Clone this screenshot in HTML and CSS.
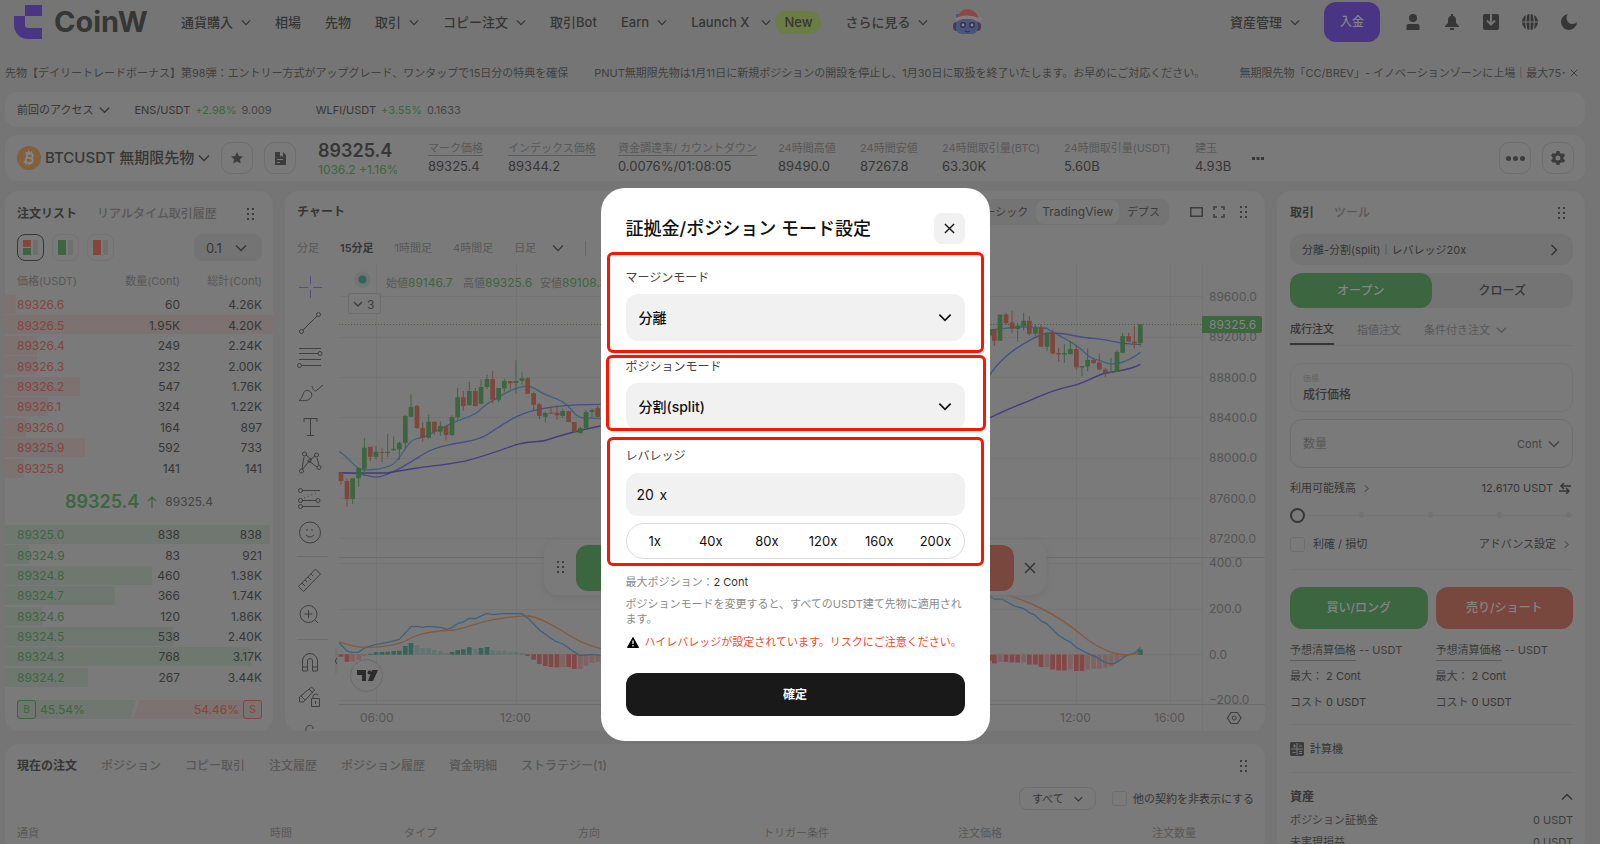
FILE: index.html
```html
<!DOCTYPE html>
<html lang="ja">
<head>
<meta charset="utf-8">
<title>BTCUSDT 無期限先物 | CoinW</title>
<link rel="stylesheet" href="styles.css">
</head>
<body>
<svg class="sprite" aria-hidden="true">
  <symbol id="down" viewBox="0 0 12 8"><path d="M1 1.5l5 5 5-5" fill="none" stroke="currentColor" stroke-width="1.5"/></symbol>
  <symbol id="right" viewBox="0 0 8 12"><path d="M1.5 1l5 5-5 5" fill="none" stroke="currentColor" stroke-width="1.5"/></symbol>
  <symbol id="grip" viewBox="0 0 8 13"><path d="M0 0h2v2H0zM5 0h2v2H5zM0 5h2v2H0zM5 5h2v2H5zM0 10h2v2H0zM5 10h2v2H5z" fill="currentColor"/></symbol>
  <symbol id="cross" viewBox="0 0 12 12"><path d="M1 1l10 10M11 1L1 11" fill="none" stroke="currentColor" stroke-width="1.5"/></symbol>
</svg>

<header class="top">
  <a class="logo" href="#">
    <svg width="28" height="34" viewBox="0 0 28 34"><path d="M11 0h17v11H11zM0 11h11v9a3 3 0 0 0 3 3h14v11H14A14 14 0 0 1 0 20z" fill="#483583"/></svg>
    <span>CoinW</span>
  </a>
  <nav class="menu">
    <a href="#">通貨購入<svg class="chev"><use href="#down"/></svg></a>
    <a href="#">相場</a>
    <a href="#">先物</a>
    <a href="#">取引<svg class="chev"><use href="#down"/></svg></a>
    <a href="#">コピー注文<svg class="chev"><use href="#down"/></svg></a>
    <a href="#">取引Bot</a>
    <a href="#">Earn<svg class="chev"><use href="#down"/></svg></a>
    <a class="launch" href="#">Launch X<svg class="chev"><use href="#down"/></svg><span class="new">New</span></a>
    <a href="#">さらに見る<svg class="chev"><use href="#down"/></svg></a>
    <svg class="mascot" width="30" height="26" viewBox="0 0 30 26">
      <path d="M4 5h4v6H4z" fill="#49577f"/>
      <rect x="1" y="13" width="28" height="9" rx="4" fill="#4b3a4b"/>
      <rect x="4" y="10" width="22" height="15" rx="6" fill="#4a547c"/>
      <path d="M6 9C7 1 15-2 21 2c4 2 5 5 5 8-6-3-14-3-20-1z" fill="#8a4847"/>
      <path d="M4 11c6-4 16-4 22 0" stroke="#857d7d" stroke-width="3" fill="none"/>
      <circle cx="28" cy="10" r="2" fill="#857d7d"/>
      <circle cx="11" cy="16" r="3" fill="#353052"/><circle cx="20" cy="16" r="3" fill="#353052"/>
      <circle cx="11" cy="16" r="1.4" fill="#8b8b99"/><circle cx="20" cy="16" r="1.4" fill="#8b8b99"/>
      <path d="M13 22q3 2 5 0" stroke="#2f2b48" fill="none"/>
    </svg>
  </nav>
  <div class="account">
    <a href="#">資産管理<svg class="chev"><use href="#down"/></svg></a>
    <button class="deposit">入金</button>
    <div class="icons">
      <svg viewBox="0 0 16 16"><circle cx="8" cy="4" r="4"/><path d="M1.500 16v-4a2 2 0 0 1 2-2h9a2 2 0 0 1 2 2v4z"/></svg>
      <svg viewBox="0 0 16 16"><path d="M7 0h2v2a4 4 0 0 1 3 4v3l3 3v1H1v-1l3-3V6a4 4 0 0 1 3-4zM6 14h4v2H6z"/></svg>
      <svg viewBox="0 0 16 16"><path fill-rule="evenodd" d="M2 0h12q2 0 2 2v12q0 2-2 2H2q-2 0-2-2V2q0-2 2-2zm5 0v8L4.500 5.800 3.300 7.200 8 12l4.700-4.800-1.200-1.400L9 8V0z"/></svg>
      <svg viewBox="0 0 16 16"><circle cx="8" cy="8" r="8"/><path d="M0 8h16M8 0v16M5 0q-2.500 8 0 16M11 0q2.500 8 0 16" stroke="#757575" stroke-width="1.200" fill="none"/></svg>
      <svg viewBox="0 0 16 16"><path d="M7 0a6 6 0 1 0 9 8A8 8 0 1 1 7 0z"/></svg>
    </div>
  </div>
</header>

<section class="ticker">
  <div class="news">
    <a href="#">先物【デイリートレードボーナス】第98弾：エントリー方式がアップグレード、ワンタップで15日分の特典を確保</a>
    <a href="#">PNUT無期限先物は1月11日に新規ポジションの開設を停止し、1月30日に取扱を終了いたします。お早めにご対応ください。</a>
    <a href="#">無期限先物「CC/BREV」- イノベーションゾーンに上場｜最大75･</a>
  </div>
  <button class="plain" aria-label="閉じる"><svg width="8" height="8"><use href="#cross"/></svg></button>
</section>

<section class="recent card">
  <button class="plain">前回のアクセス<svg width="11" height="8"><use href="#down"/></svg></button>
  <a href="#"><span>ENS/USDT</span><b>+2.98%</b><i>9.009</i></a>
  <a href="#"><span>WLFI/USDT</span><b>+3.55%</b><i>0.1633</i></a>
</section>

<section class="pair card">
  <div class="symbol">
    <svg width="24" height="24" viewBox="0 0 24 24"><circle cx="12" cy="12" r="12" fill="#825f3d"/><g transform="rotate(12 12 12)" fill="none" stroke="#858585" stroke-width="2"><path d="M7.500 7.500h5.500a2.200 2.200 0 0 1 0 4.500H9.500M9.500 12h4.200a2.400 2.400 0 0 1 0 4.800H7.500M9.500 7v10"/><path d="M10.500 4.800v2.500M13.300 4.800v2.500M10.500 16.800v2.500M13.300 16.800v2.500" stroke-width="1.500"/></g></svg>
    <h1>BTCUSDT 無期限先物</h1>
    <svg width="12" height="8"><use href="#down"/></svg>
  </div>
  <div class="buttons">
    <button class="square" aria-label="お気に入り"><svg width="12" height="12" viewBox="0 0 12 12"><path d="M6 0l1.800 3.900 4.200.5-3.100 2.900.8 4.200L6 9.400l-3.700 2.100.8-4.200L0 4.400l4.200-.5z" fill="currentColor"/></svg></button>
    <button class="square" aria-label="情報"><svg width="11" height="13" viewBox="0 0 11 13"><path fill-rule="evenodd" d="M0 0h5v5l1.500-1.500L8 5V0l3 3v10H0zM2 7v1h6V7zm0 3v1h3v-1z" fill="currentColor"/></svg></button>
  </div>
  <div class="last"><strong>89325.4</strong><span>1036.2 +1.16%</span></div>
  <dl class="stats">
    <div><dt><u>マーク価格</u></dt><dd>89325.4</dd></div>
    <div><dt><u>インデックス価格</u></dt><dd>89344.2</dd></div>
    <div><dt><u>資金調達率/ カウントダウン</u></dt><dd>0.0076%/01:08:05</dd></div>
    <div><dt>24時間高値</dt><dd>89490.0</dd></div>
    <div><dt>24時間安値</dt><dd>87267.8</dd></div>
    <div><dt>24時間取引量(BTC)</dt><dd>63.30K</dd></div>
    <div><dt>24時間取引量(USDT)</dt><dd>5.60B</dd></div>
    <div><dt>建玉</dt><dd>4.93B</dd></div>
  </dl>
  <button class="plain more" aria-label="その他の指標"><svg width="12" height="3" viewBox="0 0 12 3"><path d="M0 0h3v3H0zM4.500 0h3v3h-3zM9 0h3v3H9z" fill="currentColor"/></svg></button>
  <div class="buttons end">
    <button class="square" aria-label="その他"><svg width="19" height="5" viewBox="0 0 19 5" fill="currentColor"><circle cx="2.500" cy="2.500" r="2.500"/><circle cx="9.500" cy="2.500" r="2.500"/><circle cx="16.500" cy="2.500" r="2.500"/></svg></button>
    <button class="square" aria-label="設定"><svg width="14" height="14" viewBox="0 0 14 14"><path fill-rule="evenodd" d="M5.500 0h3l.5 2 1.500.8 2-.6L14 4.800 12.500 6v2l1.500 1.200-1.500 2.600-2-.6-1.500.8-.5 2h-3L5 12l-1.500-.8-2 .6L0 9.200 1.500 8V6L0 4.800l1.500-2.600 2 .6L5 2zM7 4.500a2.500 2.500 0 1 0 0 5 2.500 2.500 0 0 0 0-5z" fill="currentColor"/></svg></button>
  </div>
</section>

<main class="board">
  <section class="book card">
    <div class="tabs">
      <button class="plain on">注文リスト</button><button class="plain">リアルタイム取引履歴</button>
      <svg class="grip"><use href="#grip"/></svg>
    </div>
    <div class="views">
      <button class="view on" aria-label="両方"><svg width="15" height="15"><path d="M0 0h8v7H0z" fill="#84453a"/><path d="M0 8h8v7H0z" fill="#3b663f"/><path d="M10 0h5v15h-5z" fill="#6f6f6f"/></svg></button>
      <button class="view" aria-label="買い"><svg width="15" height="15"><path d="M0 0h8v15H0z" fill="#3b663f"/><path d="M10 0h5v15h-5z" fill="#6f6f6f"/></svg></button>
      <button class="view" aria-label="売り"><svg width="15" height="15"><path d="M0 0h8v15H0z" fill="#84453a"/><path d="M10 0h5v15h-5z" fill="#6f6f6f"/></svg></button>
      <label class="step"><select aria-label="価格単位"><option>0.1</option></select><svg width="12" height="8"><use href="#down"/></svg></label>
    </div>
    <table class="depth asks">
      <thead><tr><th>価格(USDT)</th><th>数量(Cont)</th><th>総計(Cont)</th></tr></thead>
      <tbody>
        <tr style="--w:4%"><td>89326.6</td><td>60</td><td>4.26K</td></tr>
        <tr style="--w:100%"><td>89326.5</td><td>1.95K</td><td>4.20K</td></tr>
        <tr style="--w:12%"><td>89326.4</td><td>249</td><td>2.24K</td></tr>
        <tr style="--w:12%"><td>89326.3</td><td>232</td><td>2.00K</td></tr>
        <tr style="--w:28%"><td>89326.2</td><td>547</td><td>1.76K</td></tr>
        <tr style="--w:16%"><td>89326.1</td><td>324</td><td>1.22K</td></tr>
        <tr style="--w:8%"><td>89326.0</td><td>164</td><td>897</td></tr>
        <tr style="--w:30%"><td>89325.9</td><td>592</td><td>733</td></tr>
        <tr style="--w:7%"><td>89325.8</td><td>141</td><td>141</td></tr>
      </tbody>
    </table>
    <div class="mid"><strong>89325.4</strong><svg width="10" height="12" viewBox="0 0 10 12"><path d="M5 12V1M1 5l4-4 4 4" fill="none" stroke="currentColor" stroke-width="1.300"/></svg><span>89325.4</span></div>
    <table class="depth bids">
      <tbody>
        <tr style="--w:99%"><td>89325.0</td><td>838</td><td>838</td></tr>
        <tr style="--w:9%"><td>89324.9</td><td>83</td><td>921</td></tr>
        <tr style="--w:55%"><td>89324.8</td><td>460</td><td>1.38K</td></tr>
        <tr style="--w:41%"><td>89324.7</td><td>366</td><td>1.74K</td></tr>
        <tr style="--w:14%"><td>89324.6</td><td>120</td><td>1.86K</td></tr>
        <tr style="--w:63%"><td>89324.5</td><td>538</td><td>2.40K</td></tr>
        <tr style="--w:92%"><td>89324.3</td><td>768</td><td>3.17K</td></tr>
        <tr style="--w:31%"><td>89324.2</td><td>267</td><td>3.44K</td></tr>
      </tbody>
    </table>
    <div class="ratio">
      <div class="buy"><b>B</b>45.54%</div><div class="sell">54.46%<b>S</b></div>
    </div>
  </section>

  <section class="chart card">
    <div class="charthead">
      <h2>チャート</h2>
      <div class="seg"><button class="plain">ベーシック</button><button class="plain on">TradingView</button><button class="plain">デプス</button></div>
      <svg width="13" height="10"><path d="M.75.75h11.500v8.500H.75z" fill="none" stroke="currentColor" stroke-width="1.500"/></svg>
      <svg width="12" height="12"><path d="M4 1H1v3M8 1h3v3M4 11H1V8M8 11h3V8" fill="none" stroke="currentColor" stroke-width="1.500"/></svg>
      <svg class="grip"><use href="#grip"/></svg>
    </div>
    <div class="frames">
      <button class="plain">分足</button><button class="plain on">15分足</button><button class="plain">1時間足</button><button class="plain">4時間足</button><button class="plain">日足</button>
      <svg width="12" height="8"><use href="#down"/></svg>
      <span class="bar"></span>
      <svg width="12" height="12"><path d="M0 0h12v12H0z" fill="#3c3c3c"/><path d="M2 8l3-4 2 2 3-3" stroke="#7a7a7a" fill="none"/></svg>
    </div>
    <div class="plotarea">
      <div class="tools">
        <svg viewBox="297 264 40 467" fill="none" stroke="#3f3f3f" stroke-width="1">
          <path d="M310.500 276v8M310.500 290v8M299 287.500h9M313 287.500h9" stroke="#554d80"/>
          <path d="M303 330l14-14"/><circle cx="301.500" cy="331.500" r="2"/><circle cx="318.500" cy="314.500" r="2"/>
          <path d="M299 348.500h22M299 353.500h19M299 359.500h22M302 365.500h19"/><circle cx="320" cy="353.500" r="2"/><circle cx="299.500" cy="365.500" r="2"/>
          <path d="M299 400.500c5-3 3-10 8-10 4 0 6 4 4 7-2 4-8 3-12 3zM312 386c1 5 4 6 5 4l6-5"/>
          <path d="M304 422v-3.500h13v3.500M310.500 419v16M307 435.500h7"/>
          <path d="M302 469l2-12M306 455l6 5M315 456l-5 4M317 458l2 7M303 469l6-8 8 6"/><circle cx="304.500" cy="454" r="2"/><circle cx="316.500" cy="455" r="2"/><circle cx="301.500" cy="471" r="2"/><circle cx="319" cy="467.500" r="2"/><circle cx="309.500" cy="461" r="1.500"/>
          <path d="M302 490.500h18M302 500.500h14M302 506.500h18"/><path d="M304 498l14-6" stroke-dasharray="1 3"/><circle cx="300.500" cy="490.500" r="2"/><circle cx="300.500" cy="500.500" r="2"/><circle cx="318" cy="500.500" r="2"/><circle cx="300.500" cy="506.500" r="2"/>
          <circle cx="310" cy="532.500" r="10.500"/><path d="M307 529v2M312 529v2M306 535q4 4 8 0"/>
          <path d="M293 556.500h35M293 639.500h35" stroke="#6c6c6c"/>
          <path d="M298.500 586.500l17-17.500 5 5-17 17.500zM302 583l3 3M305 580l2 2M308 577l3 3M311 574l2 2"/>
          <circle cx="308.500" cy="614" r="8.500"/><path d="M304.500 614h8M308.500 610v8M315 620l3 3"/>
          <path d="M302.500 671v-10a7.500 7.500 0 0 1 15 0v10h-5v-10a2.500 2.500 0 0 0-5 0v10zM302.500 667h5M312.500 667h5"/>
          <path d="M299.500 702v-5l12-10 3 3-11 12zM301 696l4 4M309 689l4 4M311.500 698.500h8v8h-8zM313 698v-2a3 3 0 0 1 5-1M315.500 701v3"/>
          <path d="M306 731v-3a4 4 0 0 1 7-1v2"/>
        </svg>
      </div>
      <svg class="plot" viewBox="335 264 930 467" preserveAspectRatio="xMinYMin slice">
        <path d="M376.500 264V704M516.500 264V704M1076.500 264V704M1170.500 264V704M339 296.500H1202M339 337.500H1202M339 377.500H1202M339 417.500H1202M339 458.500H1202M339 498.500H1202M339 538.500H1202M339 563.500H1202M339 609.500H1202M339 654.500H1202M339 700.500H1202M1202.500 264V731" stroke="#747474"/>
        <path d="M339 557.500H1265M339 704.500H1265" stroke="#6c6c6c"/>
        <path d="M339 324.500H1202" stroke="#3b663f" stroke-dasharray="1 2"/>
        <g transform="translate(280 180) scale(.33333)">
          <g fill="none" stroke-width="4">
            <path d="M177 815C195 822 225 862 240 867S305 870 335 855S380 780 410 776S480 745 520 728S580 710 600 690S680 635 710 625S750 615 780 635S850 655 875 690S920 710 962 716" stroke="#41617c"/>
            <path d="M177 879C220 872 260 890 288 891S370 860 410 835S460 805 510 794S580 785 610 770S680 720 730 701S850 673 962 673" stroke="#464f82"/>
            <path d="M177 879H320C350 875 380 868 410 864S520 852 560 842S650 815 700 797S770 790 800 780S900 750 962 738" stroke="#453d77"/>
          </g>
          <path stroke="#3b663f" stroke-width="3" d="M218 895V972M236 862V920M253 774V885M288 798V838M323 762V831M341 769V812M358 785V840M376 705V807M393 643V710M446 704V778M481 724V768M516 706V768M533 623V719M568 605V676M603 598V671M621 584V627M656 624V666M673 596V638M708 541V640M726 577V614M796 695V727M848 686V714M901 740V762M918 690V748M936 686V712"/>
          <path stroke="#3b663f" stroke-width="14" d="M218 895V957M236 864V895M253 803V866M288 815V830M323 815V819M341 806V811M358 788V808M376 708V789M393 681V710M446 725V773M481 738V755M516 711V765M533 652V712M568 633V676M603 621V671M621 597V621M656 624V659M673 603V625M708 603V609M726 595V602M796 699V710M848 693V708M901 744V759M918 696V745M936 690V696"/>
          <path stroke="#7c473c" stroke-width="3" d="M183 876V914M201 895V981M271 800V843M306 805V846M411 674V746M428 727V785M463 725V765M498 738V782M550 633V692M586 623V680M638 573V670M691 603V628M743 592V642M761 635V690M778 668V718M813 680V701M831 677V720M953 678V712"/>
          <path stroke="#7c473c" stroke-width="14" d="M183 878V903M201 903V957M271 800V830M306 816V819M411 678V744M428 744V774M463 725V755M498 738V765M550 652V678M586 633V678M638 597V659M691 603V610M743 595V641M761 640V674M778 673V708M813 698V701M831 698V706M866 693V726M883 726V757M953 685V710"/>
        </g>
        <g transform="translate(280 460) scale(.33333)">
          <path stroke="#36645b" stroke-width="14" d="M271 584V581M288 584V577M306 584V576M323 584V575M341 584V573M358 584V572M376 584V558M393 584V549M516 584V576M533 584V570M550 584V568M568 584V562M603 584V564M621 584V561"/>
          <path stroke="#61746f" stroke-width="14" d="M411 584V555M428 584V564M446 584V564M463 584V570M481 584V573M498 584V579M586 584V567M638 584V570M656 584V572M673 584V572M691 584V575M708 584V576M726 584V578"/>
          <path stroke="#854646" stroke-width="14" d="M183 583V590M201 583V605M743 583V588M761 583V599M778 583V612M796 583V618M813 583V621M831 583V622M866 583V621M883 583V627"/>
          <path stroke="#806263" stroke-width="14" d="M218 583V605M236 583V600M253 583V588M848 583V621M901 583V627M918 583V617M936 583V609M953 583V606"/>
          <path d="M177 548L200 572L213 577H235L255 563L288 553L320 548L358 538L393 500L412 499L428 502L446 499L483 502L500 508L515 503L533 491L550 486L567 475L587 476L620 460L638 464L665 461H725L745 475L780 512L825 543L848 552L880 574L900 587L940 583L962 587" fill="none" stroke="#41617c" stroke-width="4"/>
          <path d="M177 546C200 552 220 562 255 562S335 556 358 550S390 530 430 521S490 512 520 510S600 485 640 479S720 465 745 468S800 485 840 509S900 550 962 566" fill="none" stroke="#835b3f" stroke-width="4"/>
        </g>
        <g transform="translate(980 190) scale(.33333 .35075)">
          <g fill="none" stroke-width="4">
            <path d="M20 400L60 396L120 390L200 394C240 420 280 430 310 460S350 480 370 490S430 500 481 463" stroke="#41617c"/>
            <path d="M20 540C60 480 100 455 150 428S220 407 250 410S300 422 340 423S420 442 481 440" stroke="#464f82"/>
            <path d="M20 654C80 625 120 612 160 596S220 570 270 560S340 532 370 524S450 515 481 497" stroke="#453d77"/>
          </g>
          <path stroke="#3b663f" stroke-width="3" d="M113 380V432M131 350V400M166 383V418M201 407V460M253 440V493M271 432V468M306 502V532M323 452V517M393 478V521M411 457V519M428 407V464M481 383V446"/>
          <path stroke="#3b663f" stroke-width="14" d="M30 398V415M60 355V430M113 386V396M131 373V388M166 393V410M201 407V447M253 465V469M271 453V468M306 502V506M323 485V503M393 518V521M411 462V519M428 416V464M481 383V436"/>
          <path stroke="#7c473c" stroke-width="3" d="M43 398V445M78 350V385M96 345V408M148 360V415M183 383V447M218 398V468M236 450V490M289 442V512M341 480V496M358 467V514M376 508V534M446 407V433M463 388V452"/>
          <path stroke="#7c473c" stroke-width="14" d="M43 398V430M78 355V380M96 378V396M148 373V410M183 393V447M218 407V466M236 465V469M289 453V506M341 485V493M358 492V512M376 512V522M446 416V433M463 432V436"/>
          <path stroke="#854646" stroke-width="14" d="M30 1324V1342M43 1324V1350M78 1324V1345M96 1324V1347M113 1324V1347M148 1324V1353M166 1324V1353M183 1324V1360M218 1324V1367M236 1324V1370M253 1324V1370M289 1324V1371M306 1324V1371"/>
          <path stroke="#806263" stroke-width="14" d="M60 1324V1345M131 1324V1347M201 1324V1360M271 1324V1367M323 1324V1368M341 1324V1365M358 1324V1365M376 1324V1362M393 1324V1358M411 1324V1345M428 1324V1332"/>
          <path stroke="#36645b" stroke-width="14" d="M481 1310V1326"/>
          <path d="M20 1150L43 1167L65 1166L105 1187L130 1193L150 1206L165 1212L185 1230L200 1236L235 1269L255 1281L270 1288L290 1305L320 1320L350 1332Q390 1362 415 1344L440 1327L465 1320L481 1304" fill="none" stroke="#41617c" stroke-width="4"/>
          <path d="M60 1148Q130 1167 190 1196T300 1265T400 1320Q440 1330 481 1320" fill="none" stroke="#835b3f" stroke-width="4"/>
        </g>
        <g class="axis">
          <text x="1209" y="301">89600.0</text><text x="1209" y="341">89200.0</text>
          <text x="1209" y="382">88800.0</text><text x="1209" y="422">88400.0</text><text x="1209" y="462">88000.0</text>
          <text x="1209" y="503">87600.0</text><text x="1209" y="543">87200.0</text><text x="1209" y="567">400.0</text>
          <text x="1209" y="613">200.0</text><text x="1209" y="659">0.0</text><text x="1209" y="704">−200.0</text>
          <text x="360" y="722">06:00</text><text x="500" y="722">12:00</text><text x="1060" y="722">12:00</text><text x="1154" y="722">16:00</text>
        </g>
        <path d="M1202 316h58a2 2 0 0 1 2 2v13a2 2 0 0 1-2 2h-58z" fill="#3b663f"/>
        <text class="now" x="1209" y="329">89325.6</text>
        <path d="M1203 705h59v4h-59z" fill="#7a7a7a"/>
        <path d="M1231 712.500h6.500l3.500 5.500-3.500 5.500h-6.500l-3.500-5.500z" fill="none" stroke="#3f3f3f" stroke-width="1.200"/><circle cx="1234.200" cy="718" r="2" fill="none" stroke="#3f3f3f"/>
        <circle cx="362.500" cy="279.500" r="8" fill="#6e7573"/><circle cx="362.500" cy="279.500" r="4" fill="#37625a"/>
        <g class="ohlc"><text x="386" y="287">始値<tspan>89146.7</tspan></text><text x="463" y="287">高値<tspan>89325.6</tspan></text><text x="540" y="287">安値<tspan>89108.3</tspan></text></g>
        <rect x="348.500" y="293.500" width="32" height="20" rx="2" fill="#7a7a7a" stroke="#6c6c6c"/><path d="M354 302l4 4 4-4" fill="none" stroke="#3c3c3c" stroke-width="1.300"/><text class="three" x="367" y="309">3</text>
        <circle cx="366.500" cy="675.500" r="16" fill="#7a7a7a" stroke="#6c6c6c"/><path d="M357 670h9v11h-4v-6h-5zM372 670h6l-5 11h-5z" fill="#2c2c2c"/><circle cx="369.500" cy="672.500" r="2" fill="#2c2c2c"/>
        <rect x="330" y="648" width="8" height="26" rx="4" fill="#747474"/><path d="M337 658l-2 3 2 3" fill="none" stroke="#3c3c3c"/>
      </svg>
      <div class="quick">
        <svg class="grip"><use href="#grip"/></svg>
        <button class="long" aria-label="買い"></button><button class="short" aria-label="売り"></button>
        <button class="plain" aria-label="閉じる"><svg width="12" height="12"><use href="#cross"/></svg></button>
      </div>
    </div>
  </section>

  <aside class="trade card">
    <div class="tabs"><button class="plain on">取引</button><button class="plain">ツール</button><svg class="grip"><use href="#grip"/></svg></div>
    <button class="mode">分離-分割(split)｜レバレッジ20x<svg width="8" height="12"><use href="#right"/></svg></button>
    <div class="side"><button class="on">オープン</button><button>クローズ</button></div>
    <div class="types"><button class="plain on">成行注文</button><button class="plain">指値注文</button><button class="plain">条件付き注文<svg width="11" height="8"><use href="#down"/></svg></button></div>
    <label class="field price"><span>価格</span><input value="成行価格" readonly></label>
    <div class="field qty"><input aria-label="数量" placeholder="数量"><label><select aria-label="単位"><option>Cont</option></select><svg width="12" height="8"><use href="#down"/></svg></label></div>
    <div class="line balance"><span>利用可能残高<svg width="5" height="9"><use href="#right"/></svg></span><span>12.6170 USDT<svg width="12" height="11" viewBox="0 0 12 11"><path d="M12 3H2M5 0L2 3l3 3M0 8h10M7 5l3 3-3 3" fill="none" stroke="currentColor" stroke-width="1.500"/></svg></span></div>
    <input class="slider" type="range" min="0" max="100" value="0" aria-label="割合">
    <div class="line"><label class="check"><input type="checkbox">利確 / 損切</label><span>アドバンス設定<svg width="5" height="9"><use href="#right"/></svg></span></div>
    <hr>
    <div class="pairrow actions"><button class="long">買い/ロング</button><button class="short">売り/ショート</button></div>
    <div class="pairrow est">
      <div><p><u>予想清算価格</u> -- USDT</p><p>最大： <b>2 Cont</b></p><p>コスト <b>0 USDT</b></p></div>
      <div><p><u>予想清算価格</u> -- USDT</p><p>最大： <b>2 Cont</b></p><p>コスト <b>0 USDT</b></p></div>
    </div>
    <hr>
    <button class="plain calc"><svg width="14" height="14" viewBox="0 0 14 14"><path d="M1 0h12l1 1v12l-1 1H1l-1-1V1z" fill="#3c3c3c"/><path d="M7 1v12M1 7h12M3 4h3M4.500 2.500v3M9 4h3M2.500 10.500h3M9 9.500h3M9 11.500h3" stroke="#7a7a7a"/></svg>計算機</button>
    <hr>
    <div class="line assets"><h2>資産</h2><svg class="flip" width="12" height="8"><use href="#down"/></svg></div>
    <div class="line sum"><span>ポジション証拠金</span><span>0 USDT</span></div>
    <div class="line sum"><span>未実現損益</span><span>0 USDT</span></div>
  </aside>

  <section class="orders card">
    <div class="tabs">
      <button class="plain on">現在の注文</button><button class="plain">ポジション</button><button class="plain">コピー取引</button><button class="plain">注文履歴</button><button class="plain">ポジション履歴</button><button class="plain">資金明細</button><button class="plain">ストラテジー(1)</button>
      <svg class="grip"><use href="#grip"/></svg>
    </div>
    <div class="filters">
      <label class="all"><select aria-label="種類"><option>すべて</option></select><svg width="9" height="6"><use href="#down"/></svg></label>
      <label class="check"><input type="checkbox">他の契約を非表示にする</label>
    </div>
    <table class="list"><thead><tr><th>通貨</th><th>時間</th><th>タイプ</th><th>方向</th><th>トリガー条件</th><th>注文価格</th><th>注文数量</th></tr></thead></table>
  </section>
</main>

<div class="overlay">
  <form class="modal" role="dialog" aria-labelledby="title">
    <div class="mhead"><h2 id="title">証拠金/ポジション モード設定</h2><button type="button" class="close" aria-label="閉じる"><svg width="11" height="11"><use href="#cross"/></svg></button></div>
    <div class="group g1"><label for="margin">マージンモード</label><div class="pick"><select id="margin"><option>分離</option></select><svg width="14" height="9"><use href="#down"/></svg></div></div>
    <div class="group g2"><label for="position">ポジションモード</label><div class="pick"><select id="position"><option>分割(split)</option></select><svg width="14" height="9"><use href="#down"/></svg></div></div>
    <div class="group g3">
      <label for="lev">レバレッジ</label>
      <div class="lev"><input id="lev" value="20"><span>x</span></div>
      <div class="presets"><button type="button">1x</button><button type="button">40x</button><button type="button">80x</button><button type="button">120x</button><button type="button">160x</button><button type="button">200x</button></div>
    </div>
    <p class="max">最大ポジション：<b>2 Cont</b></p>
    <p class="note">ポジションモードを変更すると、すべてのUSDT建て先物に適用され<br>ます。</p>
    <p class="warn"><svg width="12" height="11" viewBox="0 0 12 11"><path d="M6 0.500L11.500 10.500H.5z" fill="#000" stroke="#000" stroke-linejoin="round"/><path d="M6 3.500v3.500M6 8v1.500" stroke="#fff" stroke-width="1.300"/></svg>ハイレバレッジが設定されています。リスクにご注意ください。</p>
    <button class="ok">確定</button>
  </form>
</div>
</body>
</html>
```
FILE: styles.css
```css
:root {
  --page: #757575;
  --card: #7a7a7a;
  --soft: #747474;
  --line: #6e6e6e;
  --ink: #363636;
  --mute: #585858;
  --green: #3b663f;
  --red: #7c4237;
}
* { box-sizing: border-box; }
body {
  margin: 0;
  height: 100vh;
  overflow: hidden;
  background: var(--page);
  color: var(--ink);
  font: 11px/16px Inter, "Noto Sans CJK JP", sans-serif;
}
h1, h2, p, dl, dd { margin: 0; }
a { color: inherit; text-decoration: none; }
button, input, select { font: inherit; color: inherit; margin: 0; padding: 0; border: 0; background: none; }
select { appearance: none; }
svg { display: block; flex: none; }
.sprite { position: absolute; width: 0; height: 0; }
.plain { display: flex; align-items: center; white-space: nowrap; }
.card { background: var(--card); margin: 0 15px 0 5px; border-radius: 12px; }
.grip { width: 8px; height: 13px; color: #3c3c3c; }
.chev { width: 10px; height: 7px; }
u { text-decoration: none; border-bottom: 1px solid #5c5c5c; }

.top { display: flex; align-items: center; height: 44px; padding: 0 23px 0 14px; font-size: 13px; font-weight: 500; }
.logo { display: flex; align-items: center; gap: 12px; width: 167px; font-size: 29px; font-weight: 700; line-height: 34px; }
.menu { display: flex; align-items: center; gap: 24px; white-space: nowrap; }
.menu a, .account a { display: flex; align-items: center; gap: 8px; }
.menu .launch { gap: 12px; }
.new { height: 23px; margin-left: -8px; padding: 0 9px; border-radius: 12px; background: #6c7c45; font-size: 13px; line-height: 23px; }
.account { display: flex; align-items: center; margin-left: auto; }
.deposit { width: 56px; height: 40px; margin: 0 25px 0 24px; border-radius: 12px; background: #483583; color: #858585; font-size: 12px; }
.icons { display: flex; gap: 23px; }
.icons svg { width: 16px; height: 16px; fill: #363636; }

.ticker { display: flex; align-items: center; justify-content: space-between; height: 48px; padding: 10px 22px 0 5px; color: #404040; }
.news { display: grid; grid-template-columns: 590fr 646fr 328fr; flex: 1; overflow: hidden; white-space: nowrap; margin-right: 3px; }
.news a { min-width: 0; }

.recent { display: flex; align-items: center; gap: 44px; height: 35px; padding: 0 12px; }
.recent .plain { gap: 6px; margin-right: -20px; }
.recent a { display: flex; gap: 5px; }
.recent b { color: var(--green); font-weight: 400; }
.recent i { color: #444; font-style: normal; }

.pair { display: flex; align-items: center; height: 46px; margin-top: 8px; margin-bottom: 10px; padding: 0 12px; }
.symbol { display: flex; align-items: center; gap: 4px; width: 204px; white-space: nowrap; }
.symbol h1 { font-size: 15px; font-weight: 500; line-height: 20px; }
.buttons { display: flex; gap: 11px; }
.buttons.end { margin-left: auto; margin-right: -1px; }
.square { display: grid; place-items: center; width: 32px; height: 32px; border: 1px solid var(--line); border-radius: 10px; color: #3c3c3c; }
.last { width: 110px; margin-left: 22px; padding-top: 3px; white-space: nowrap; }
.last strong { display: block; font-size: 18px; font-weight: 600; line-height: 20px; }
.last span { display: block; color: var(--green); font-size: 12px; line-height: 18px; }
.stats { display: grid; grid-template-columns: 80px 110px 160px 82px 82px 122px 131px 57px; white-space: nowrap; }
.stats dt { color: var(--mute); line-height: 16px; }
.stats dd { font-size: 13px; line-height: 20px; }

.board { display: grid; grid-template-columns: 268px minmax(0, 1fr) 308px; grid-template-rows: auto 1fr; gap: 13px 12px; padding: 0 15px 0 5px; }
.board .card { margin: 0; border-radius: 14px; overflow: hidden; }
.tabs { display: flex; align-items: center; gap: 20px; height: 20px; padding: 0 12px; color: var(--mute); font-size: 12px; font-weight: 500; }
.tabs .on { color: var(--ink); font-weight: 600; }
.tabs .grip { margin-left: auto; margin-right: 6px; }

.book { padding: 13px 0 10px; }
.views { display: flex; gap: 8px; margin: 10px 11px 10px 12px; }
.view { display: grid; place-items: center; width: 27px; height: 27px; border: 1px solid #737373; border-radius: 8px; }
.view.on { border: 1px solid var(--ink); }
.step { display: flex; align-items: center; justify-content: space-between; width: 68px; margin-left: auto; padding: 0 15px 0 12px; border-radius: 8px; background: var(--soft); font-size: 13px; }
.depth { width: 100%; border-collapse: collapse; font-size: 12px; text-align: right; }
.depth th { height: 24px; padding: 0 0 4px; color: var(--mute); font-size: 11px; font-weight: 400; }
.depth td { padding: 0; }
.depth th:first-child, .depth td:first-child { width: 90px; padding-left: 12px; text-align: left; }
.depth th:nth-child(2), .depth td:nth-child(2) { width: 85px; }
.depth th:last-child, .depth td:last-child { padding-right: 11px; }
.depth tbody tr { background: linear-gradient(var(--fill), var(--fill)) 0 0 / var(--w) 19px no-repeat; }
.asks { height: 208px; --fill: #7b7271; }
.bids { height: 163px; --fill: #707770; }
.asks td:first-child { color: #85453a; }
.bids td:first-child { color: var(--green); }
.mid { display: flex; align-items: center; justify-content: center; gap: 8px; height: 46px; color: var(--green); }
.mid strong { font-size: 18px; font-weight: 600; }
.mid span { color: #444; font-size: 12px; }
.ratio { display: flex; gap: 0; height: 19px; margin: 12px 11px 0 12px; font-size: 12px; line-height: 19px; }
.ratio div { display: flex; gap: 4px; }
.ratio b { width: 19px; border: 1px solid; border-radius: 3px; font-size: 10px; font-weight: 400; line-height: 17px; text-align: center; }
.buy { width: 119px; margin-right: -3px; color: var(--green); background: #707770; clip-path: polygon(0 0, 100% 0, 95% 100%, 0 100%); }
.sell { flex: 1; justify-content: flex-end; color: #85453a; background: #7b7271; clip-path: polygon(5% 0, 100% 0, 100% 100%, 0 100%); }

.chart { display: flex; flex-direction: column; }
.charthead { display: flex; align-items: center; gap: 10px; height: 34px; margin-top: 4px; padding: 0 17px 0 12px; color: #3c3c3c; }
.charthead h2 { margin-right: auto; color: var(--ink); font-size: 12px; font-weight: 600; }
.charthead .grip { margin-left: 5px; }
.seg { display: flex; height: 26px; margin-right: 11px; padding: 1px; border-radius: 8px; background: var(--soft); }
.seg button { padding: 0 8px; }
.seg .on { border-radius: 8px; background: var(--card); font-size: 12px; padding: 0 6px; }
.frames { display: flex; align-items: center; gap: 21px; height: 32px; margin-top: 3px; padding: 0 12px; color: var(--mute); }
.frames .on { color: var(--ink); font-weight: 600; }
.frames svg { color: #3c3c3c; }
.frames svg:first-of-type { margin-left: -5px; }
.bar { width: 1px; height: 15px; background: #686868; margin-right: -3px; }
.plotarea { position: relative; display: flex; height: 467px; }
.tools { width: 50px; padding-left: 12px; }
.tools svg { width: 40px; height: 467px; overflow: hidden; }
.plot { flex: 1; min-width: 0; height: 467px; }
.plot text { font-size: 12px; }
.axis { fill: #555; }
.now { fill: #858585; }
.ohlc { fill: var(--mute); }
.ohlc text { font-size: 11px; }
.ohlc tspan { fill: var(--green); font-size: 12px; }
.three { fill: #3c3c3c; }
.quick { position: absolute; left: 259px; top: 276px; display: flex; align-items: center; width: 502px; height: 55px; padding: 5px 10px 5px 13px; border-radius: 14px; background: var(--card); box-shadow: 0 2px 6px #727272; }
.quick button { height: 46px; }
.quick .long { flex: 1; margin-left: 11px; border-radius: 12px 0 0 12px; }
.quick .short { flex: 1; margin-right: 10px; border-radius: 0 12px 12px 0; }
.long { background: var(--green); color: #858585; }
.short { background: #78483e; color: #8a8484; }

.trade { grid-column: 3; grid-row: 1 / 3; padding: 12px 12px 0 13px; }
.trade .tabs { padding: 0; }
.trade .tabs .grip { margin-right: 7px; }
.mode { display: flex; align-items: center; justify-content: space-between; width: 100%; height: 31px; margin-top: 11px; padding: 0 15px 0 12px; border-radius: 12px; background: var(--soft); }
.side { display: grid; grid-template-columns: 1fr 1fr; height: 35px; margin-top: 8px; border-radius: 12px; background: var(--soft); font-size: 12px; font-weight: 500; }
.side .on { border-radius: 12px; background: var(--green); color: #858585; }
.types { display: flex; gap: 23px; height: 32px; margin-top: 6px; border-bottom: 1px solid var(--soft); color: var(--mute); }
.types .on { color: var(--ink); border-bottom: 2px solid var(--ink); font-weight: 500; }
.types button svg { margin-left: 6px; }
.field { display: flex; height: 49px; padding: 0 12px; border: 1px solid var(--soft); border-radius: 12px; }
.field input { width: 100%; min-width: 0; font-size: 12px; }
.price { flex-direction: column; justify-content: center; margin-top: 17px; }
.price span { color: #626262; font-size: 8px; line-height: 12px; }
.price input { height: 20px; font-weight: 500; }
.qty { align-items: center; margin-top: 7px; border-color: var(--line); }
.qty input::placeholder { color: var(--mute); opacity: 1; }
.qty label { display: flex; align-items: center; gap: 6px; color: #444; }
.line { display: flex; align-items: center; justify-content: space-between; height: 18px; }
.line span { display: flex; align-items: center; gap: 8px; }
.line > span:last-child { padding-right: 4px; }
.balance { margin-top: 11px; }
.balance span:last-child { padding-right: 2px; gap: 6px; }
.slider { display: block; width: 100%; height: 16px; margin: 10px 0 12px; appearance: none; background: radial-gradient(circle, #737373 3px, transparent 3px) 37px 0 / 69px 16px, linear-gradient(#747474, #747474) 0 50% / 100% 1px no-repeat; }
.slider::-webkit-slider-thumb { appearance: none; width: 15px; height: 15px; border: 2px solid var(--ink); border-radius: 50%; background: var(--card); }
.check { display: flex; align-items: center; gap: 8px; white-space: nowrap; }
.check input { appearance: none; width: 15px; height: 15px; border: 1px solid var(--line); border-radius: 3px; }
hr { width: 100%; height: 1px; margin: 16px 0 17px; border: 0; background: var(--soft); }
.pairrow { display: grid; grid-template-columns: 1fr 1fr; gap: 8px; }
.actions button { height: 42px; border-radius: 12px; font-size: 12px; font-weight: 500; }
.est { margin-top: 8px; }
.est p { height: 26px; line-height: 26px; color: #3c3c3c; }
.est b { color: var(--ink); font-weight: 400; }
.est u { display: inline-block; line-height: 19px; }
.est + hr { margin: 9px 0 16px; }
.calc { gap: 6px; }
.calc + hr { margin: 15px 0 16px; }
.assets { margin-top: -1px; height: 18px; }
.assets h2 { font-size: 12px; font-weight: 600; }
.flip { transform: rotate(180deg); }
.sum { height: 22px; margin-top: 0; color: #3c3c3c; }
.sum:nth-last-child(2) { margin-top: 3px; }
.line.sum > span:last-child { padding-right: 0; }

.orders { grid-column: 1 / 3; padding-top: 12px; }
.orders .tabs { gap: 24px; }
.orders .tabs .grip { margin-right: 5px; }
.filters { display: flex; justify-content: flex-end; align-items: center; gap: 16px; margin-top: 11px; padding-right: 11px; }
.filters .check { gap: 6px; }
.all { display: flex; align-items: center; justify-content: space-between; width: 77px; height: 23px; padding: 0 12px; border: 1px solid var(--line); border-radius: 8px; }
.list { width: 100%; margin-top: 15px; border-collapse: collapse; color: var(--mute); table-layout: fixed; text-align: left; }
.list th { padding: 0 0 20px; font-weight: 400; }
.list th:nth-child(1) { width: 265px; padding-left: 12px; }
.list th:nth-child(2) { width: 134px; }
.list th:nth-child(3) { width: 174px; }
.list th:nth-child(4) { width: 185px; }
.list th:nth-child(5) { width: 195px; }
.list th:nth-child(6) { width: 194px; }

.overlay { position: fixed; inset: 0; display: grid; place-items: start center; padding: 188px 10px 0 0; }
.modal { width: 389px; padding: 25px 25px; border-radius: 24px; background: #fff; color: #111; }
.mhead { display: flex; align-items: center; justify-content: space-between; height: 31px; white-space: nowrap; }
.mhead h2 { font-size: 18px; font-weight: 500; line-height: 28px; }
.close { display: grid; place-items: center; width: 31px; height: 31px; border-radius: 8px; background: #f1f1f1; }
.group { position: relative; }
.group > label { display: block; height: 24px; color: #444; font-size: 12px; line-height: 16px; }
.group::after { content: ""; position: absolute; border: 3px solid #fd1500; border-radius: 6px; pointer-events: none; }
.g1 { margin-top: 26px; }
.g1::after { inset: -18px -19px -12px; }
.g2 { margin-top: 18px; }
.g2::after { inset: -4px -21px -1px -20px; }
.g3 { margin-top: 18px; }
.g3::after { inset: -11px -19px -7px; }
.pick { position: relative; }
.pick select { display: block; width: 100%; height: 47px; padding: 0 13px; border-radius: 12px; background: #f1f1f1; font-size: 14px; font-weight: 500; }
.pick svg { position: absolute; right: 13px; top: 19px; pointer-events: none; }
.lev { display: flex; align-items: center; height: 43px; margin-top: 1px; padding: 0 11px; border-radius: 12px; background: #f1f1f1; font-size: 14px; }
.lev input { width: 23px; }
.presets { display: grid; grid-template-columns: repeat(6, 1fr); height: 36px; margin-top: 7px; border: 1px solid #dcdcdc; border-radius: 18px; font-size: 13px; }
.max, .note { color: #8a8a8a; white-space: nowrap; }
.max { margin-top: 15px; }
.max b { color: #333; font-weight: 400; }
.note { margin-top: 7px; line-height: 15px; }
.warn { display: flex; align-items: center; gap: 6px; margin-top: 7px; padding-left: 1px; color: #ef4a2c; white-space: nowrap; }
.ok { display: block; width: 100%; height: 43px; margin-top: 23px; border-radius: 12px; background: #191919; color: #fff; font-size: 12px; font-weight: 600; }
```
